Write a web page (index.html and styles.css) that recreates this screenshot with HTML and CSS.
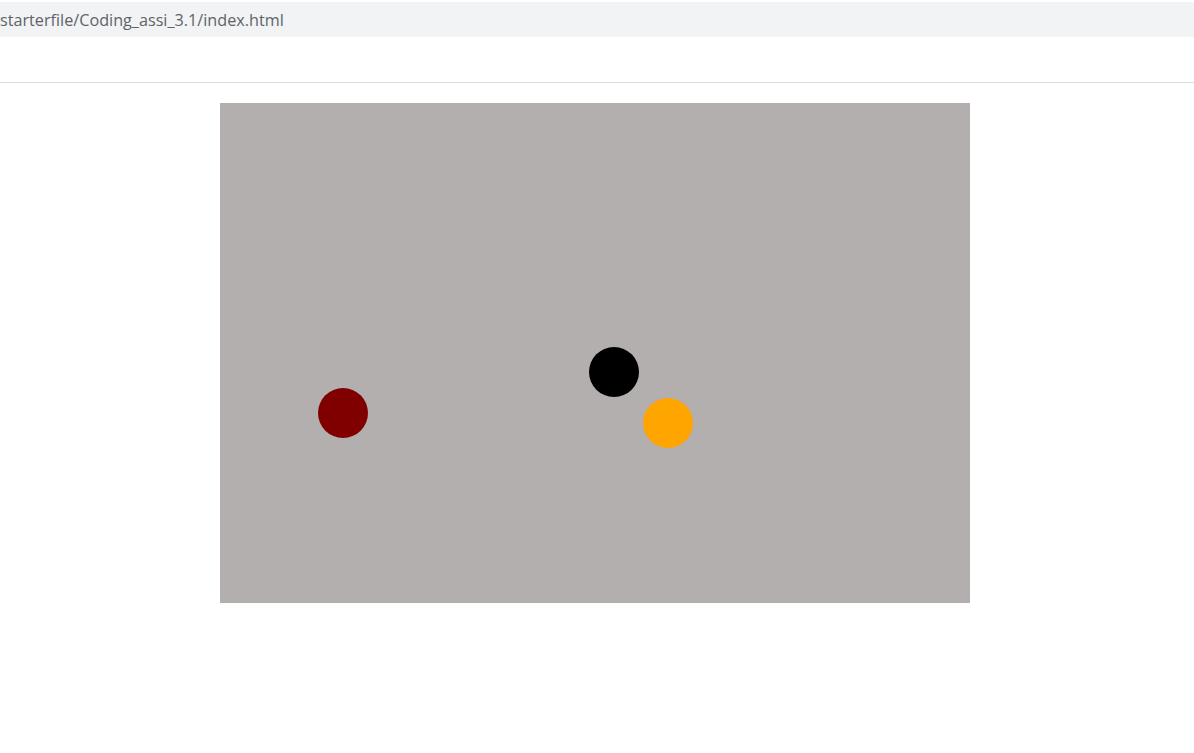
FILE: index.html
```html
<!DOCTYPE html>
<html lang="en">
<head>
<meta charset="utf-8">
<title>Coding_assi_3.1</title>
<link rel="stylesheet" href="styles.css">
</head>
<body>
<header class="chrome">
  <div class="address-bar"><span class="url">starterfile/Coding_assi_3.1/index.html</span></div>
  <div class="toolbar"></div>
</header>
<main class="stage">
  <div class="canvas">
    <span class="ball ball-red"></span>
    <span class="ball ball-black"></span>
    <span class="ball ball-orange"></span>
  </div>
</main>
</body>
</html>
```
FILE: styles.css
```css
html, body {
  margin: 0;
  padding: 0;
  background: #ffffff;
}
body {
  width: 1194px;
  height: 753px;
  overflow: hidden;
  font-family: "Open Sans", "Noto Sans", sans-serif;
}
.chrome {
  padding-top: 2px;
}
.address-bar {
  height: 35px;
  background: #f1f3f4;
  display: flex;
  align-items: center;
  overflow: hidden;
}
.url {
  font-size: 16.2px;
  color: #5f6368;
  margin-left: 0;
  white-space: nowrap;
  position: relative;
  top: 0;
}
.toolbar {
  height: 45px;
  border-bottom: 1px solid #dadce0;
}
.stage {
  padding: 20px 0 0 220px;
}
.canvas {
  position: relative;
  width: 750px;
  height: 500px;
  background: #b2afae;
}
.ball {
  position: absolute;
  width: 50px;
  height: 50px;
  border-radius: 50%;
}
.ball-red {
  left: 98px;
  top: 285px;
  background: #800000;
}
.ball-black {
  left: 369px;
  top: 244px;
  background: #000000;
}
.ball-orange {
  left: 423px;
  top: 295px;
  background: #ffa500;
}
```
